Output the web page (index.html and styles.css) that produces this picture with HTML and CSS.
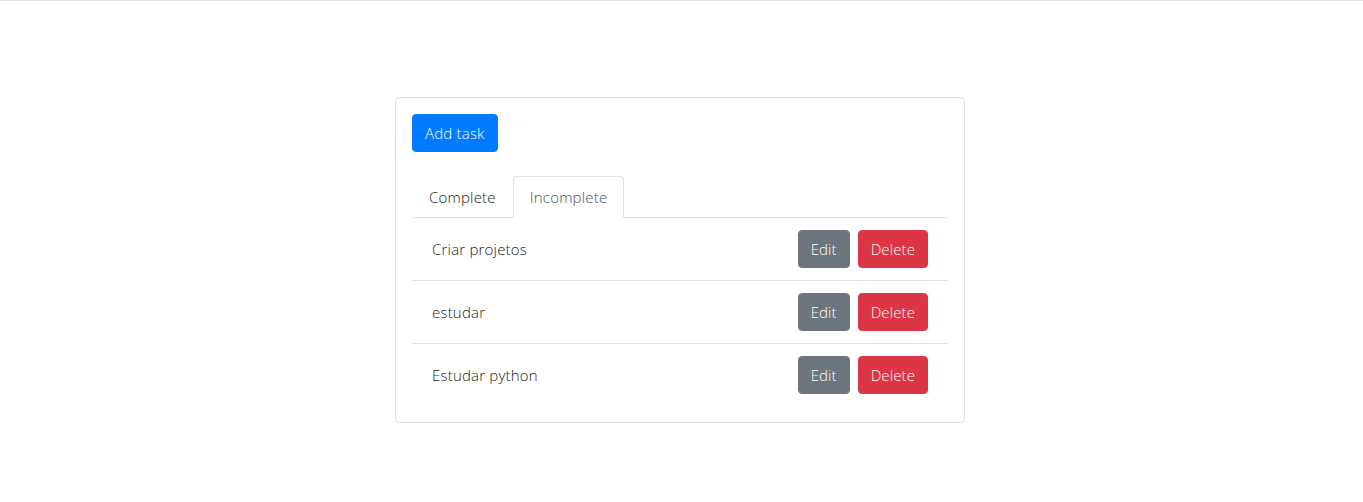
FILE: index.html
```html
<!DOCTYPE html>
<html>
<head>
<meta charset="utf-8">
<link rel="stylesheet" href="styles.css">
</head>
<body>
<div class="topbar"></div>
<main class="page">
  <section class="card">
    <div><button class="btn btn-primary">Add task</button></div>
    <nav class="tabs">
      <a class="tab">Complete</a>
      <a class="tab active">Incomplete</a>
    </nav>
    <ul class="list">
      <li class="item"><span class="title">Criar projetos</span><span class="actions"><button class="btn btn-secondary">Edit</button><button class="btn btn-danger">Delete</button></span></li>
      <li class="item"><span class="title">estudar</span><span class="actions"><button class="btn btn-secondary">Edit</button><button class="btn btn-danger">Delete</button></span></li>
      <li class="item"><span class="title">Estudar python</span><span class="actions"><button class="btn btn-secondary">Edit</button><button class="btn btn-danger">Delete</button></span></li>
    </ul>
  </section>
</main>
</body>
</html>
```
FILE: styles.css
```css
* { box-sizing: border-box; }
html, body { margin: 0; padding: 0; background: #fff; }
body {
  font-family: "Open Sans", "Noto Sans", sans-serif;
  font-weight: 300;
  font-size: 15px;
  letter-spacing: 0.2px;
  color: #1a1d20;
}
.topbar { height: 1px; background: #dee2e6; }
.page {
  display: flex;
  justify-content: center;
  padding-top: 96px;
  padding-right: 3px;
}
.card {
  width: 570px;
  border: 1px solid #dfdfdf;
  border-radius: 4px;
  padding: 16px;
}
.btn {
  font-family: inherit;
  font-weight: 300;
  font-size: 15px;
  letter-spacing: 0.2px;
  height: 38px;
  line-height: 36px;
  padding: 0 12px;
  border: 1px solid transparent;
  border-radius: 4px;
  color: #fff;
  cursor: pointer;
}
.actions .btn { letter-spacing: 0.1px; }
.btn-primary { background: #007bff; border-color: #007bff; }
.btn-secondary { background: #6c757d; border-color: #6c757d; }
.btn-danger { background: #dc3545; border-color: #dc3545; }
.tabs {
  display: flex;
  margin-top: 24px;
  border-bottom: 1px solid #dee2e6;
}
.tab {
  display: block;
  height: 42px;
  line-height: 40px;
  padding: 0 16px;
  margin-bottom: -1px;
  border: 1px solid transparent;
  border-top-left-radius: 4px;
  border-top-right-radius: 4px;
  color: #1a1d20;
}
.tab.active {
  color: #495057;
  border-color: #dee2e6 #dee2e6 #fff;
  background: #fff;
}
.list { list-style: none; margin: 0; padding: 0; }
.item {
  display: flex;
  align-items: center;
  justify-content: space-between;
  padding: 12px 20px;
  border-bottom: 1px solid #dee2e6;
}
.item:last-child { border-bottom: none; }
.actions { display: flex; gap: 8px; }
```
